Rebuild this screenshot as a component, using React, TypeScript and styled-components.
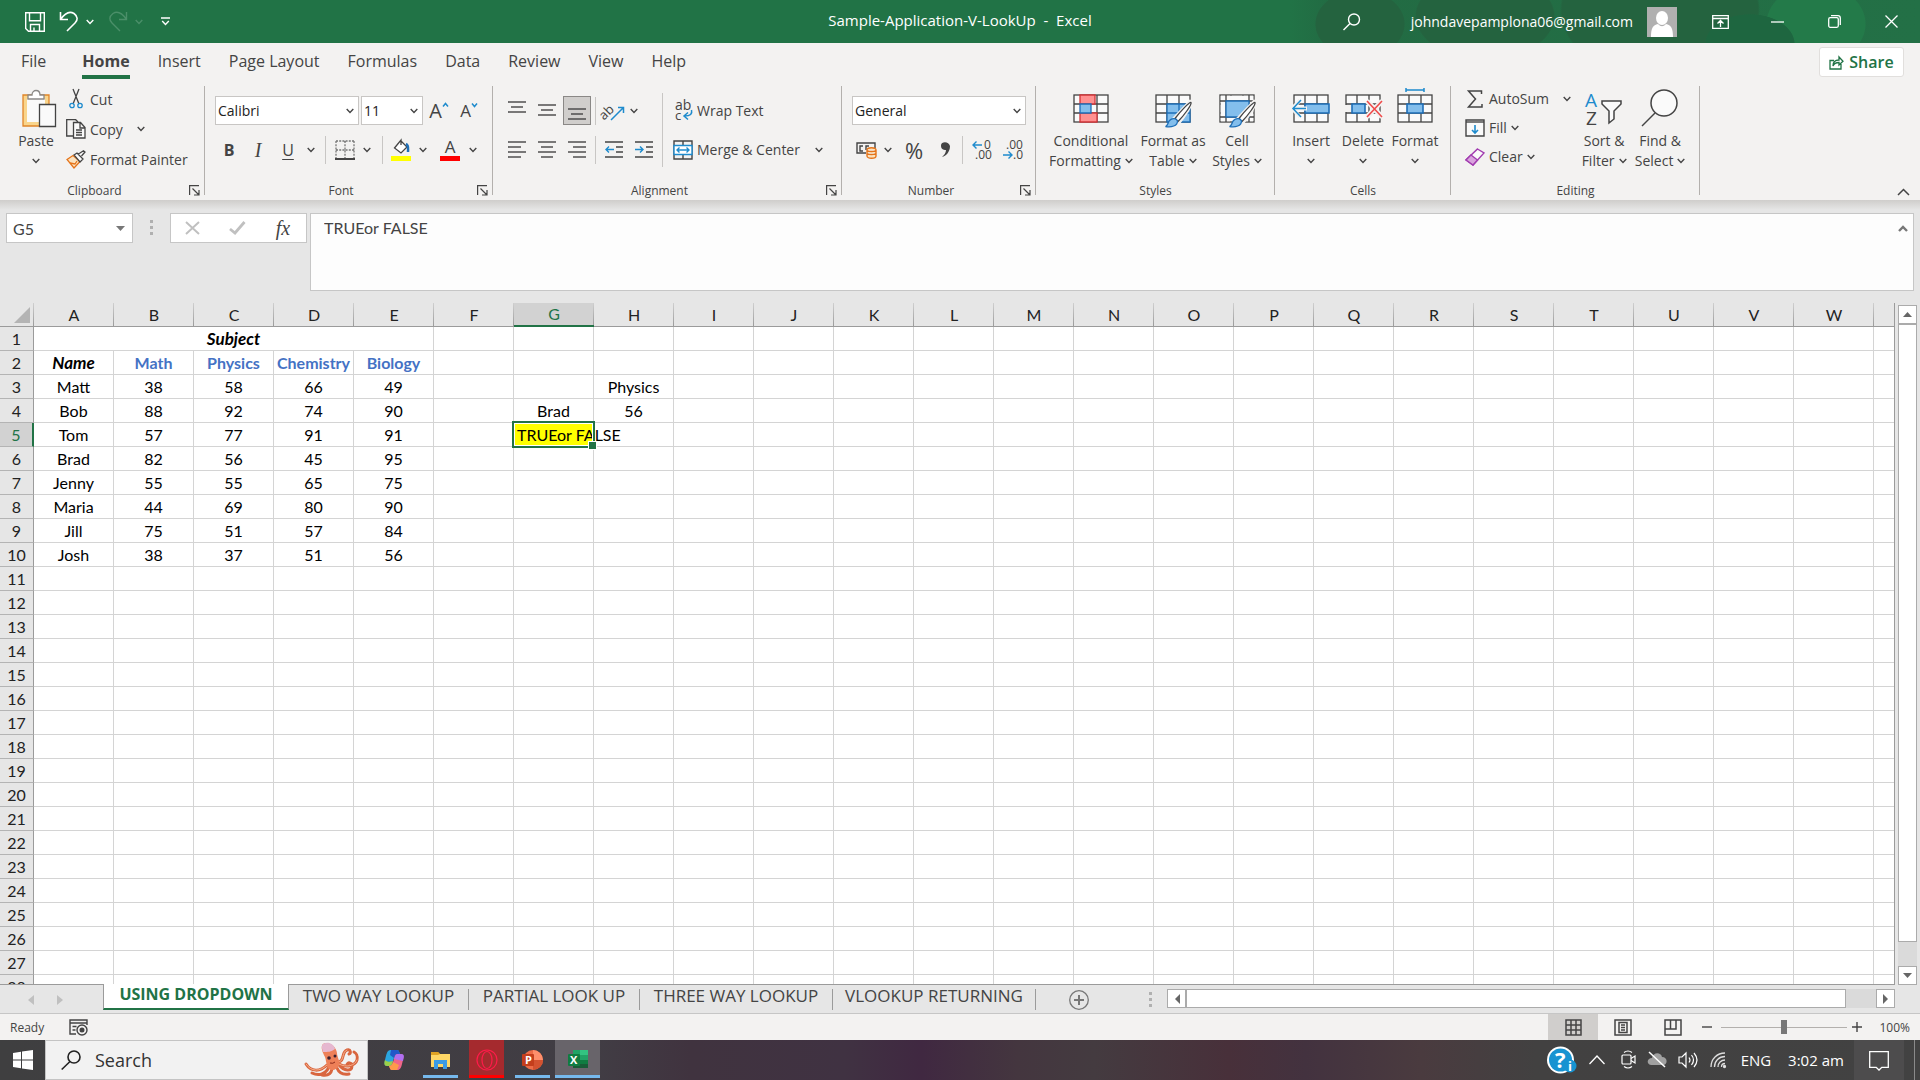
import React from 'react';
import styled, { createGlobalStyle, css } from 'styled-components';

const ui = '"Open Sans", "Noto Sans", sans-serif';
const cellFont = 'Lato, "Open Sans", sans-serif';
const green = '#217346';
const ink = '#444444';
const blue = '#1e8bcd';

const Global = createGlobalStyle`
  * { box-sizing: border-box; }
  body { margin: 0; font-family: ${ui}; font-size: 14px; color: ${ink}; background: #e6e6e6; }
  button, input, select, textarea { font: inherit; color: inherit; margin: 0; }
  button { border: 0; padding: 0; background: none; }
  svg { display: block; flex: none; overflow: visible; }
`;

const App = styled.div`
  height: 100vh;
  display: flex;
  flex-direction: column;
  overflow: hidden;
  white-space: nowrap;
`;

const Button = styled.button<{ $w?: number; $on?: boolean }>`
  display: flex;
  align-items: center;
  justify-content: center;
  flex: none;
  height: 29px;
  width: ${(p) => (p.$w ? `${p.$w}px` : 'auto')};
  ${(p) => p.$on && css`background: #d0cecc; border: 1px solid #8a8886;`}
`;

/* ---------- title bar ---------- */
const TitleBar = styled.header`
  height: 43px;
  flex: none;
  display: grid;
  grid-template-columns: 1fr auto 1fr;
  color: #fff;
  background:
    radial-gradient(ellipse 45px 30px at 1750px 44px, #1e6640 98%, transparent),
    radial-gradient(ellipse 50px 40px at 1816px 24px, #237a49 98%, transparent),
    radial-gradient(ellipse 100px 70px at 1660px 10px, #24633f 98%, transparent),
    radial-gradient(ellipse 70px 44px at 1485px 16px, #24633f 98%, transparent),
    radial-gradient(ellipse 45px 34px at 1360px 24px, #24633f 98%, transparent),
    linear-gradient(90deg, ${green} 1290px, #226b43 1330px, #237046 100%);
`;
const QuickAccess = styled.div`
  display: flex;
  align-items: center;
  gap: 14px;
  padding-left: 25px;
`;
const QuickPair = styled.div`
  display: flex;
  gap: 7px;
`;
const DocTitle = styled.h1`
  margin: 0;
  font-size: 15px;
  font-weight: 400;
  line-height: 40px;
  white-space: pre;
`;
const Account = styled.div`
  display: flex;
  align-items: center;
  justify-content: flex-end;
  padding-right: 10px;
`;
const Email = styled.button`
  display: flex;
  align-items: center;
  gap: 14px;
  margin: 0 5px 0 50px;
`;

/* ---------- tabs ---------- */
const TabRow = styled.nav`
  height: 37px;
  flex: none;
  display: flex;
  align-items: stretch;
  gap: 28px;
  padding: 0 16px 0 21px;
  background: #f3f2f1;
  font-size: 16px;
`;
const Tab = styled.button<{ $active?: boolean }>`
  line-height: 27px;
  padding-top: 5px;
  border-bottom: 4px solid transparent;
  margin-bottom: 1px;
  ${(p) => p.$active && css`font-weight: 700; border-color: ${green}; margin-left: 8px;`}
`;
const Share = styled.button`
  display: flex;
  align-items: center;
  justify-content: center;
  gap: 5px;
  width: 85px;
  height: 30px;
  margin: 4px 0 0 auto;
  border: 1px solid #e1dfdd;
  border-radius: 3px;
  background: #fff;
  color: ${green};
  font-weight: 600;
`;

/* ---------- ribbon ---------- */
const Ribbon = styled.div`
  height: 120px;
  flex: none;
  display: flex;
  background: #f3f2f1;
`;
const GroupBox = styled.section<{ $w: number }>`
  width: ${(p) => p.$w}px;
  flex: none;
  display: flex;
  flex-direction: column;
  padding-top: 4px;
  background: linear-gradient(#b3b0ad, #b3b0ad) right 6px / 1px 109px no-repeat;
`;
const GroupBody = styled.div<{ $pad: number; $gap?: number }>`
  height: 96px;
  display: flex;
  align-items: flex-start;
  padding-left: ${(p) => p.$pad}px;
  gap: ${(p) => p.$gap || 0}px;
`;
const GroupFoot = styled.div<{ $launch?: boolean }>`
  height: 20px;
  display: grid;
  grid-template-columns: ${(p) => (p.$launch ? '1fr 16px' : '1fr')};
  align-items: center;
  text-align: center;
  font-size: 12px;
`;
const Stack = styled.div<{ $compact?: boolean }>`
  display: flex;
  flex-direction: column;
  ${(p) => !p.$compact && css`padding-top: 12px; gap: 10px;`}
`;
const Row = styled.div<{ $gap?: number }>`
  display: flex;
  align-items: center;
  gap: ${(p) => p.$gap || 0}px;
`;
const Sep = styled.span<{ $m: number }>`
  width: 1px;
  height: 28px;
  margin: 0 ${(p) => p.$m}px;
  background: #c8c6c4;
`;
const TallSep = styled(Sep)`
  height: 74px;
  margin-top: 9px;
`;
const LineButton = styled.button<{ $h?: number }>`
  display: flex;
  align-items: center;
  gap: 4px;
  height: ${(p) => p.$h || 29}px;
`;
const Glyph = styled.span<{ $w?: number }>`
  width: ${(p) => p.$w || 20}px;
  display: flex;
  justify-content: ${(p) => (p.$w ? 'flex-end' : 'center')};
  flex: none;
`;
const BigButton = styled.button<{ $w: number }>`
  width: ${(p) => p.$w}px;
  flex: none;
  display: flex;
  flex-direction: column;
  align-items: center;
  line-height: 20px;
  padding-top: 4px;
`;
const BigIcon = styled.span`
  height: 43px;
`;
const BigLine = styled.span`
  display: flex;
  align-items: center;
  gap: 4px;
  height: 20px;
`;
const Picker = styled.label<{ $w: number }>`
  display: flex;
  align-items: center;
  width: ${(p) => p.$w}px;
  height: 29px;
  padding-right: 4px;
  border: 1px solid #c8c6c4;
  background: #fff;
  select {
    appearance: none;
    flex: 1;
    min-width: 0;
    border: 0;
    padding: 0 2px;
    background: none;
    color: #222;
  }
`;
const Letter = styled.span<{ $size?: number; $v?: 'b' | 'i' | 'u' }>`
  font-size: ${(p) => p.$size || 16}px;
  line-height: 20px;
  ${(p) => p.$v === 'b' && css`font-weight: 700;`}
  ${(p) => p.$v === 'i' && css`font-family: "Liberation Serif", serif; font-style: italic; font-size: 20px;`}
  ${(p) => p.$v === 'u' && css`text-decoration: underline; text-underline-offset: 3px;`}
`;
const Swatch = styled.span<{ $c: string }>`
  display: flex;
  justify-content: center;
  width: 20px;
  height: 22px;
  border-bottom: 5px solid ${(p) => p.$c};
  line-height: 16px;
  font-size: 17px;
`;
const Collapse = styled.button`
  margin: auto 10px 4px auto;
`;

/* ---------- formula bar ---------- */
const FormulaBar = styled.div`
  height: 103px;
  flex: none;
  display: flex;
  align-items: flex-start;
  padding: 13px 6px 0;
  background: linear-gradient(#cfcdcb, #e6e6e6 10px);
`;
const NameBox = styled.div`
  display: flex;
  align-items: center;
  width: 127px;
  height: 30px;
  padding: 0 7px 0 6px;
  border: 1px solid #c6c6c6;
  background: #fff;
  input { flex: 1; min-width: 0; border: 0; padding: 0; background: none; font-family: ${cellFont}; font-size: 16px; }
`;
const Grip = styled.span`
  width: 3px;
  height: 15px;
  margin: 7px 17px;
  background: repeating-linear-gradient(#b0b0b0 0 3px, transparent 3px 6px);
`;
const FxBox = styled.div`
  display: flex;
  align-items: center;
  width: 137px;
  height: 30px;
  border: 1px solid #c6c6c6;
  background: #fff;
`;
const Formula = styled.div`
  flex: 1;
  display: flex;
  align-items: flex-start;
  height: 78px;
  margin-left: 3px;
  padding: 4px 4px 0 13px;
  border: 1px solid #c6c6c6;
  background: #fdfdfd;
  textarea {
    flex: 1;
    height: 66px;
    border: 0;
    padding: 0;
    resize: none;
    background: none;
    font-family: ${cellFont};
    font-size: 16px;
    line-height: 20px;
  }
`;

/* ---------- sheet ---------- */
const Sheet = styled.main`
  flex: 1;
  min-height: 0;
  display: flex;
`;
const Viewport = styled.div`
  flex: 1;
  min-width: 0;
  overflow: hidden;
  border-right: 1px solid #9b9b9b;
  border-bottom: 1px solid #9b9b9b;
  background: #fff;
`;
const Grid = styled.table`
  table-layout: fixed;
  width: 1954px;
  border-collapse: separate;
  border-spacing: 0;
  font-family: ${cellFont};
  font-size: 16px;
  line-height: 20px;
  color: #000;
`;
const ColHead = styled.th<{ $on?: boolean }>`
  height: 24px;
  padding: 0;
  font-weight: 400;
  color: ${(p) => (p.$on ? green : '#222')};
  border-bottom: ${(p) => (p.$on ? `2px solid ${green}` : '1px solid #9b9b9b')};
  background: linear-gradient(#cfcfcf, #9b9b9b) right / 1px 100% no-repeat, ${(p) => (p.$on ? '#d2d2d2' : '#e6e6e6')};
  svg { margin-left: 14px; }
`;
const RowHead = styled.th<{ $on?: boolean }>`
  height: 24px;
  padding: 0;
  font-weight: 400;
  color: ${(p) => (p.$on ? green : '#222')};
  border-right: ${(p) => (p.$on ? `2px solid ${green}` : '1px solid #9b9b9b')};
  border-bottom: 1px solid #b4b4b4;
  background: ${(p) => (p.$on ? '#d2d2d2' : '#e6e6e6')};
`;
type Kind = 'name' | 'head' | 'subject' | 'selected' | undefined;
const Cell = styled.td<{ $kind?: Kind }>`
  padding: 0;
  text-align: center;
  border-right: 1px solid #d4d4d4;
  border-bottom: 1px solid #d4d4d4;
  ${(p) => (p.$kind === 'name' || p.$kind === 'subject') && css`font-size: 17px; font-weight: 700; font-style: italic;`}
  ${(p) => p.$kind === 'head' && css`font-weight: 700; color: #4472c4;`}
  ${(p) => p.$kind === 'selected' && css`
    position: relative;
    padding-left: 3px;
    text-align: left;
    background: #ffff00;
    &::before {
      content: '';
      position: absolute;
      inset: -2px;
      border: 2px solid ${green};
      box-shadow: inset 0 0 0 1px #fff;
    }
    &::after {
      content: '';
      position: absolute;
      right: -4px;
      bottom: -4px;
      width: 7px;
      height: 7px;
      border: 1px solid #fff;
      background: ${green};
    }
  `}
`;
const VScroll = styled.div`
  width: 25px;
  display: flex;
  flex-direction: column;
  padding: 2px 3px 0;
`;
const ScrollButton = styled.button`
  display: flex;
  align-items: center;
  justify-content: center;
  width: 19px;
  height: 19px;
  flex: none;
  border: 1px solid #ababab;
  background: #fff;
`;
const Thumb = styled.div<{ $grow: number }>`
  flex: ${(p) => p.$grow};
  border: 1px solid #ababab;
  background: #fff;
`;
const Track = styled.div<{ $grow: number }>`
  flex: ${(p) => p.$grow};
  background: #dadada;
`;

/* ---------- sheet tabs ---------- */
const TabStrip = styled.div`
  height: 29px;
  flex: none;
  display: flex;
  align-items: flex-start;
  padding-right: 25px;
  border-bottom: 1px solid #c6c6c6;
  background: #e6e6e6;
  font-size: 17px;
`;
const Arrows = styled.div`
  display: flex;
  align-items: center;
  gap: 23px;
  width: 103px;
  height: 29px;
  padding-left: 28px;
`;
const SheetTab = styled.button<{ $w: number; $active?: boolean }>`
  width: ${(p) => p.$w}px;
  height: 21px;
  margin-top: 4px;
  padding-bottom: 8px;
  line-height: 13px;
  border-right: 1px solid #9b9b9b;
  ${(p) => p.$active && css`
    height: 26px;
    margin-top: -1px;
    padding-bottom: 3px;
    background: #fff;
    color: ${green};
    font-size: 16px;
    font-weight: 700;
    border-left: 1px solid #9b9b9b;
    border-bottom: 2px solid ${green};
  `}
`;
const HScroll = styled.div`
  flex: 1;
  display: flex;
  height: 19px;
  margin: 4px 0 0;
`;
const TabGrip = styled(Grip)`
  height: 15px;
  margin: 7px 15px 0 27px;
`;

/* ---------- status bar ---------- */
const StatusBar = styled.footer`
  height: 26px;
  flex: none;
  display: flex;
  align-items: center;
  padding: 0 10px;
  background: #f3f2f1;
  font-size: 12px;
`;
const Macro = styled.button`
  margin: 0 auto 0 25px;
`;
const ViewButton = styled.button<{ $on?: boolean }>`
  display: flex;
  align-items: center;
  justify-content: center;
  width: 50px;
  height: 26px;
  background: ${(p) => (p.$on ? '#d0cecc' : 'none')};
`;
const Zoom = styled.input`
  appearance: none;
  width: 126px;
  height: 15px;
  margin: 0 5px;
  background: linear-gradient(#b3b0ad, #b3b0ad) center / 100% 1px no-repeat;
  &::-webkit-slider-thumb {
    appearance: none;
    width: 6px;
    height: 14px;
    background: #777;
  }
`;
const Percent = styled.span`
  width: 48px;
  text-align: right;
`;

/* ---------- taskbar ---------- */
const Taskbar = styled.div`
  height: 40px;
  flex: none;
  display: flex;
  color: #fff;
  background: linear-gradient(90deg, #3f3f40 0, #413d44 31%, #40333f 36%, #403242 44%, #402841 48%, #44363f 53%, #443b40 57%, #48303a 64%, #43323f 68%, #4a3b3f 74%, #424141 80%, #424242 100%);
`;
const Task = styled.button<{ $w: number; $bg?: string; $bar?: string }>`
  width: ${(p) => p.$w}px;
  display: flex;
  align-items: center;
  justify-content: center;
  flex: none;
  padding-top: 4px;
  background: ${(p) => p.$bg || 'none'};
  border-bottom: 3px solid ${(p) => p.$bar || 'transparent'};
  margin-bottom: 2px;
`;
const SearchBox = styled.label`
  display: flex;
  align-items: center;
  gap: 14px;
  width: 323px;
  padding: 0 8px 0 15px;
  border: 1px solid #c4c4c4;
  background: #f2f2f2;
  color: #222;
  input { flex: 1; min-width: 0; border: 0; padding: 0; background: none; font-size: 18px; &::placeholder { color: #333; opacity: 1; } }
`;
const Apps = styled.div`
  display: flex;
  gap: 11px;
  padding-left: 8px;
  margin-right: 5px;
`;
const Tray = styled.div`
  display: flex;
  margin-left: auto;
  font-size: 15px;
`;
const Notify = styled(Task)`
  background: #4d4c4d;
  margin: 0 10px 0 2px;
`;
const Edge = styled.span`
  width: 6px;
  border-left: 1px solid #8a8a8a;
`;

/* ---------- icons ---------- */
type IconProps = { w: number; h: number; children: React.ReactNode; c?: string; sw?: number };
const Icon = ({ w, h, children, c = '#444', sw = 1 }: IconProps) => (
  <svg width={w} height={h} viewBox={`0 0 ${w} ${h}`} fill="none" stroke={c} strokeWidth={sw} aria-hidden="true">
    {children}
  </svg>
);
const Down = ({ c = '#444' }: { c?: string }) => <Icon w={8} h={6} c={c} sw={1.4}><path d="M.7 1 4 4.4 7.3 1" /></Icon>;
const Tri = ({ d, c = '#666', w = 9, h = 9 }: { d: string; c?: string; w?: number; h?: number }) => (
  <svg width={w} height={h} viewBox={`0 0 ${w} ${h}`} fill={c} aria-hidden="true"><path d={d} /></svg>
);
const Launcher = () => <Icon w={11} h={11} sw={1.2}><path d="M.6 10V.6H10M3.5 3.5l6 6M10 5v5H5" /></Icon>;
const Lines = ({ rows, c = '#444' }: { rows: [number, number, number][]; c?: string }) => (
  <Icon w={18} h={18} c={c} sw={1.4}>{rows.map(([x1, x2, y]) => <path key={y} d={`M${x1} ${y}H${x2}`} />)}</Icon>
);
const TableArt = ({ children }: { children?: React.ReactNode }) => (
  <Icon w={40} h={40} sw={1.3}>
    <rect x="3" y="7" width="34" height="27" fill="#fafafa" />
    <path d="M3 16h34M3 25h34M14 7v27M26 7v27" />
    {children}
  </Icon>
);
const Brush = () => (
  <>
    <path d="M37 14 22 30l4 4c5-6 9-12 12-19z" fill="#fff" stroke="#f3f2f1" strokeWidth="4" />
    <path d="M38 14.5c-1-1-10 8-16 16l3 3c6-6 14-17 13-19z" fill="#fff" />
    <path d="M24.5 33c0 5-6 6.500-12 5.500 3-1 2-4 4-6 3-3 7-2 8 .5z" fill="#83beec" stroke="#1e6fb8" />
  </>
);
const Octopus = () => (
  <Icon w={54} h={36} c="#d9663f" sw={3}>
    <path d="M22 23C15 30 6 30 1 22M24 25c-4 8-11 9-17 6M27 27c-1 5-4 7-10 6M32 26c2 5 6 7 12 6M34 23c5 6 13 7 13 1 0-4-5-4-5-1M33 20c7 0 3-10 9-12 4-1 4 3 2 4M34 22c7 4 16 2 18-4 1-4-1-7-3-8" strokeLinecap="round" />
    <path d="M22 23C15 30 6 30 1 22M33 20c7 0 3-10 9-12M34 22c7 4 16 2 18-4" strokeLinecap="round" stroke="#f7b08c" strokeWidth="1" />
    <path d="M18 2C23-1 31 4 32 11c0 4 3 7 2 12-2 6-10 7-12 1-1-4-1-6-2-9-2-4-5-10-2-13z" fill="#ee8058" stroke="none" />
    <path d="M18 2C23-1 29 2 30 7c-4 3-7 3-12 3-1-3-2-6 0-8z" fill="#e6b8d0" stroke="none" />
    <circle cx="24" cy="16" r="1.800" fill="#3a2030" stroke="none" /><circle cx="30" cy="14" r="1.500" fill="#3a2030" stroke="none" />
    <path d="M25 21q3 1 5-1" stroke="#8d2c1c" strokeWidth="1" />
  </Icon>
);
const Person = () => (
  <svg width="30" height="30" viewBox="0 0 30 30" fill="#fff" aria-hidden="true">
    <path fill="#b0b0b0" d="M0 0h30v30H0z" />
    <ellipse cx="15" cy="11" rx="6" ry="7" /><path d="M4 30c0-9 2-12 7-13 3 3 5 3 8 0 5 1 7 4 7 13z" />
  </svg>
);

/* ---------- data ---------- */
const columns = 'ABCDEFGHIJKLMNOPQRSTUVWX'.split('');
const rows: (string | undefined)[][] = [
  ['Subject'],
  ['Name', 'Math', 'Physics', 'Chemistry', 'Biology'],
  ['Matt', '38', '58', '66', '49', , , 'Physics'],
  ['Bob', '88', '92', '74', '90', , 'Brad', '56'],
  ['Tom', '57', '77', '91', '91', , 'TRUEor FALSE'],
  ['Brad', '82', '56', '45', '95'],
  ['Jenny', '55', '55', '65', '75'],
  ['Maria', '44', '69', '80', '90'],
  ['Jill', '75', '51', '57', '84'],
  ['Josh', '38', '37', '51', '56'],
];
const kindOf = (r: number, c: number): Kind => {
  if (r === 0 && c === 0) return 'subject';
  if (r === 1 && c === 0) return 'name';
  if (r === 1 && c < 5) return 'head';
  if (r === 4 && c === 6) return 'selected';
  return undefined;
};
const tabs = ['File', 'Home', 'Insert', 'Page Layout', 'Formulas', 'Data', 'Review', 'View', 'Help'];
const sheets: [string, number][] = [['USING DROPDOWN', 186], ['TWO WAY LOOKUP', 180], ['PARTIAL LOOK UP', 171], ['THREE WAY LOOKUP', 193], ['VLOOKUP RETURNING', 203]];

const Group = ({ title, w, pad, gap, launch, children }: { title: string; w: number; pad: number; gap?: number; launch?: boolean; children: React.ReactNode }) => (
  <GroupBox $w={w} aria-label={title}>
    <GroupBody $pad={pad} $gap={gap}>{children}</GroupBody>
    <GroupFoot $launch={launch}><span>{title}</span>{launch && <button aria-label={`${title} settings`}><Launcher /></button>}</GroupFoot>
  </GroupBox>
);
const Big = ({ w, icon, a, b }: { w: number; icon: React.ReactNode; a: string; b?: string }) => (
  <BigButton $w={w}><BigIcon>{icon}</BigIcon><BigLine>{a}</BigLine><BigLine>{b}<Down /></BigLine></BigButton>
);
const Drop = ({ w, label, c }: { w: number; label: string; c?: string }) => <Button $w={w} aria-label={label}><Down c={c} /></Button>;

export default function Workbook() {
  return (
    <App>
      <Global />
      <TitleBar>
        <QuickAccess>
          <Button $w={20} aria-label="Save"><Icon w={20} h={20} c="#fff" sw={1.4}><path d="M.7.7h18.600v18.600H3.500L.7 16.500zM4.500.7v8h11v-8M5.500 19v-6.500h9V19M9 19v-3.500" /></Icon></Button>
          <QuickPair>
            <Button $w={20} aria-label="Undo"><Icon w={20} h={21} c="#fff" sw={1.6}><path d="M1.500 1v7.500H9M1.500 8.500C6 2 11 0 15 2.500c4 3 4 6.500 1 9.500L8 20" /></Icon></Button>
            <Drop w={8} label="Undo history" c="#fff" />
          </QuickPair>
          <QuickPair>
            <Button $w={20} aria-label="Redo"><Icon w={20} h={21} c="#4b8f69" sw={1.4}><path d="M18.500 1v7.500H11M18.500 8.500C14 2 9 0 5 2.500c-4 3-4 6.500-1 9.500l8 8" /></Icon></Button>
            <Drop w={8} label="Redo history" c="#4b8f69" />
          </QuickPair>
          <Button $w={17} aria-label="Customize quick access"><Icon w={9} h={9} c="#fff" sw={1.4}><path d="M0 1h9M1.200 4 4.500 7.400 7.800 4" /></Icon></Button>
        </QuickAccess>
        <DocTitle>{'Sample-Application-V-LookUp  -  Excel'}</DocTitle>
        <Account>
          <Button aria-label="Search"><Icon w={18} h={18} c="#fff" sw={1.4}><circle cx="11" cy="6.500" r="5.500" /><path d="M7 10.500.5 17" /></Icon></Button>
          <Email>johndavepamplona06@gmail.com<Person /></Email>
          <Button $w={76} aria-label="Ribbon options"><Icon w={17} h={14} c="#fff" sw={1.3}><path d="M.7.7h15.600v12.600H.7zM.7 3.500h15.600M8.500 12V6M5.500 8.500l3-3 3 3" /></Icon></Button>
          <Button $w={38} aria-label="Minimize"><Icon w={13} h={12} c="#fff" sw={1.3}><path d="M0 6h13" /></Icon></Button>
          <Button $w={76} aria-label="Restore"><Icon w={13} h={13} c="#fff" sw={1.3}><rect x=".7" y="2.700" width="9.600" height="9.600" rx="1.500" /><path d="M3 .7h7q2.300 0 2.300 2.300v7" /></Icon></Button>
          <Button $w={38} aria-label="Close"><Icon w={13} h={13} c="#fff" sw={1.3}><path d="m.5.5 12 12M12.500.5l-12 12" /></Icon></Button>
        </Account>
      </TitleBar>

      <TabRow>
        {tabs.map((t) => <Tab key={t} $active={t === 'Home'}>{t}</Tab>)}
        <Share><Icon w={15} h={15} c={green} sw={1.3}><path d="M5 5.500H1v8.500h11V9M4 11c0-4 2-6 6-6V2l4 4.300L10 10V7.500C7 7.500 5 8.500 4 11z" /></Icon>Share</Share>
      </TabRow>

      <Ribbon>
        <Group title="Clipboard" w={205} pad={9} gap={3} launch>
          <Big w={54} a="Paste" icon={
            <Icon w={36} h={42} sw={1.3}>
              <path d="M5 7h26v31H5z" fill="#f9d58c" stroke="#e08528" /><path d="M9 11h18v23H9z" fill="#fafafa" stroke="none" />
              <path d="M10 11V7h4c0-6 8-6 8 0h4v4z" fill="#fff" stroke="#8a8886" />
              <path d="M21.500 16.500h16v22h-16z" fill="#fafafa" />
            </Icon>} />
          <Stack $compact>
            <LineButton $h={30}><Glyph><Icon w={14} h={20} sw={1.3}><path d="M4 0l6 15M10 0 4 15" /><circle cx="3" cy="16.500" r="2.200" stroke={blue} /><circle cx="11" cy="16.500" r="2.200" stroke={blue} /></Icon></Glyph>Cut</LineButton>
            <Row>
              <LineButton $h={30}><Glyph><Icon w={20} h={20} sw={1.3}><path d="M7 17H.7V.7h9L12 3" /><path d="M7.500 3.500h7l4.500 5V19H7.500zM14 3.500V9h5M10 11h6M10 13.500h6M10 16h6" fill="#fafafa" /></Icon></Glyph>Copy</LineButton>
              <Drop w={36} label="Copy options" />
            </Row>
            <LineButton $h={30}><Glyph><Icon w={20} h={19} sw={1.3}><path d="M1 9.500 7 5.500l7 6-6 6.500z" fill="#fbe3c0" stroke="#e5741a" /><path d="M4 13l5 1 2-3" stroke="#e5741a" /><path d="m8 5 3-2 6 6-3 3zM12 4l2-1L17.500.7 19 2l-3.500 4" fill="#fafafa" /></Icon></Glyph>Format Painter</LineButton>
          </Stack>
        </Group>

        <Group title="Font" w={288} pad={10} launch>
          <Stack>
            <Row $gap={2}>
              <Picker $w={144}><select aria-label="Font"><option>Calibri</option></select><Down /></Picker>
              <Picker $w={62}><select aria-label="Font size"><option>11</option></select><Down /></Picker>
              <Row>
                <Button $w={28} aria-label="Grow font"><Letter $size={20}>A</Letter><Icon w={7} h={17} c={blue} sw={1.5}><path d="m1 4.500 2.500-3 2.500 3" /></Icon></Button>
                <Button $w={32} aria-label="Shrink font"><Letter $size={17}>A</Letter><Icon w={7} h={17} c={blue} sw={1.5}><path d="m1 1.500 2.500 3 2.500-3" /></Icon></Button>
              </Row>
            </Row>
            <Row>
              <Button $w={28}><Letter $v="b">B</Letter></Button>
              <Button $w={30}><Letter $v="i">I</Letter></Button>
              <Button $w={30}><Letter $v="u">U</Letter></Button>
              <Drop w={16} label="Underline options" />
              <Sep $m={6} />
              <Button $w={26} aria-label="Borders"><Icon w={20} h={20} sw={1.3}><path d="M1 1h18M1 10h18M1 1v17M10 1v17M19 1v17" strokeDasharray="2 1.200" stroke="#777" /><path d="M0 19h20" strokeWidth="2" /></Icon></Button>
              <Drop w={18} label="Border options" />
              <Sep $m={6} />
              <Button $w={24} aria-label="Fill color"><Swatch $c="#ffff00"><Icon w={18} h={16} sw={1.3}><path d="M9 2 15 8l-6 6-6.500-5L9 1v5" fill="#fff" /><path d="M14 5c3 1 2 5 2 8" stroke="#1e6fb8" strokeWidth="2.500" /></Icon></Swatch></Button>
              <Drop w={20} label="Fill color options" />
              <Button $w={34} aria-label="Font color"><Swatch $c="#ff0000">A</Swatch></Button>
              <Drop w={12} label="Font color options" />
            </Row>
          </Stack>
        </Group>

        <Group title="Alignment" w={349} pad={10} launch>
          <Stack>
            <Row>
              <Button $w={28} aria-label="Top align"><Lines rows={[[0, 18, 0], [3, 15, 5], [0, 18, 10]]} /></Button>
              <Button $w={32} aria-label="Middle align"><Lines rows={[[0, 18, 3], [3, 15, 8], [0, 18, 13]]} /></Button>
              <Button $w={28} $on aria-label="Bottom align"><Lines rows={[[0, 18, 7], [3, 15, 12], [0, 18, 17]]} /></Button>
              <Sep $m={4} />
              <Button $w={28} aria-label="Orientation"><Icon w={22} h={20}><text x="-3" y="14" fontSize="13" transform="rotate(-45 6 12)" fill="#444" stroke="none">ab</text><path d="M8 19 20 7M15 6.500h5.500V12" stroke={blue} strokeWidth="1.500" /></Icon></Button>
              <Drop w={12} label="Orientation options" />
            </Row>
            <Row>
              <Button $w={28} aria-label="Align left"><Lines rows={[[0, 18, 1], [0, 13, 6], [0, 18, 11], [0, 13, 16]]} /></Button>
              <Button $w={32} aria-label="Center"><Lines rows={[[0, 18, 1], [3, 15, 6], [0, 18, 11], [3, 15, 16]]} /></Button>
              <Button $w={28} aria-label="Align right"><Lines rows={[[0, 18, 1], [5, 18, 6], [0, 18, 11], [5, 18, 16]]} /></Button>
              <Sep $m={4} />
              <Button $w={28} aria-label="Decrease indent"><Icon w={18} h={18} sw={1.4}><path d="M0 1h18M11 6h7M11 11h7M0 16h18" /><path d="M9 8.500H1M4 5.500l-3 3 3 3" stroke={blue} /></Icon></Button>
              <Button $w={32} aria-label="Increase indent"><Icon w={18} h={18} sw={1.4}><path d="M0 1h18M11 6h7M11 11h7M0 16h18" /><path d="M0 8.500h8M5 5.500l3 3-3 3" stroke={blue} /></Icon></Button>
            </Row>
          </Stack>
          <TallSep $m={2} />
          <Stack>
            <Row><LineButton><Glyph $w={28}><Icon w={18} h={22}><text x="0" y="10" fontSize="14" fill="#444" stroke="none">ab</text><text x="0" y="20" fontSize="13" fill="#444" stroke="none">c</text><path d="M16.500 10c1 4-1 6-7 6M13 12.500 9 16l4 3.500" stroke={blue} strokeWidth="1.500" /></Icon></Glyph>Wrap Text</LineButton></Row>
            <Row>
              <LineButton><Glyph $w={28}><Icon w={20} h={20} sw={1.4}><path d="M1 1h18v18H1zM10 1v4M10 15v4" /><path d="M1 5.500h18v9H1z" stroke={blue} fill="#fff" /><path d="M4 10h12M6.500 7.500 4 10l2.500 2.500M13.500 7.500 16 10l-2.500 2.500" stroke={blue} /></Icon></Glyph>Merge &amp; Center</LineButton>
              <Drop w={38} label="Merge options" />
            </Row>
          </Stack>
        </Group>

        <Group title="Number" w={194} pad={10} launch>
          <Stack>
            <Picker $w={174}><select aria-label="Number format"><option>General</option></select><Down /></Picker>
            <Row>
              <Button $w={28} aria-label="Currency"><Icon w={21} h={18} sw={1.4}><path d="M10 12H1V2h18v5M7 5H4v5h3M10 9V5h3" /><path d="M11 9c0-3 9-3 9 0v6c0 3-9 3-9 0zM11 9c0 2 9 2 9 0M11 12c0 2 9 2 9 0" stroke="#e5741a" fill="#fbe3c0" /></Icon></Button>
              <Drop w={16} label="Currency options" />
              <Button $w={36} aria-label="Percent"><Letter $size={22}>%</Letter></Button>
              <Button $w={26} aria-label="Comma"><svg width="11" height="17" viewBox="0 0 11 17" fill="#444"><path d="M1 4.500C1 0 9 0 10 5c0 6-4 10-8 11 2-2 4-4 4-7-3 0-5-1-5-4.500z" /></svg></Button>
              <Sep $m={4} />
              <Button $w={30} aria-label="Increase decimal"><Icon w={20} h={20}><text x="12" y="9" fontSize="12" fill="#444" stroke="none">0</text><text x="3" y="19" fontSize="12" fill="#444" stroke="none">.00</text><path d="M10 5H1M4.500 1.500 1 5l3.500 3.500" stroke={blue} strokeWidth="1.400" /></Icon></Button>
              <Button $w={32} aria-label="Decrease decimal"><Icon w={20} h={20}><text x="3" y="9" fontSize="12" fill="#444" stroke="none">.00</text><text x="10" y="19" fontSize="12" fill="#444" stroke="none">.0</text><path d="M0 15h9M5.500 11.500 9 15l-3.500 3.500" stroke={blue} strokeWidth="1.400" /></Icon></Button>
            </Row>
          </Stack>
        </Group>

        <Group title="Styles" w={239} pad={10}>
          <Big w={90} a="Conditional" b="Formatting" icon={
            <TableArt><path d="M9 7h15v9H9zM9 25h17v9H9z" fill="#ff9090" stroke="#d13438" /><path d="M9 16h11v9H9z" fill="#83beec" stroke="#1e6fb8" /></TableArt>} />
          <Big w={74} a="Format as" b="Table" icon={<TableArt><path d="M14 16h23v18H14z" fill="#83beec" stroke="#1e6fb8" /><path d="M14 25h23M26 16v18" stroke="#1e6fb8" /><Brush /></TableArt>} />
          <Big w={54} a="Cell" b="Styles" icon={<TableArt><path d="M3.700 7.700h32.600v25.600H3.700z" fill="#fafafa" stroke="none" /><path d="M3 13h34M9 7v27M32 7v27M3 29h34" /><path d="M9 13h23v16H9z" fill="#83beec" stroke="#1e6fb8" /><Brush /></TableArt>} />
        </Group>

        <Group title="Cells" w={176} pad={10}>
          <Big w={52} a="Insert" icon={<TableArt><path d="M14 16h24v9H14z" fill="#83beec" stroke="#1e6fb8" strokeWidth="1.600" /><path d="M9 12 1.500 20.500 9 29M2 20.500h14" stroke="#f3f2f1" strokeWidth="4" /><path d="M10 12 2 20.500l8 8.500M2 20.500h13" stroke={blue} strokeWidth="1.500" /></TableArt>} />
          <Big w={52} a="Delete" icon={<TableArt><path d="M2 17h6v7H2z" fill="#f3f2f1" stroke="none" /><path d="M9 16h13v9H9z" fill="#83beec" stroke="#1e6fb8" strokeWidth="1.600" /><path d="m24 13 15 16M39 13 24 29" stroke="#f3f2f1" strokeWidth="5" /><path d="m24 13 15 16M39 13 24 29" stroke="#f04a4a" strokeWidth="1.600" /></TableArt>} />
          <Big w={52} a="Format" icon={<TableArt><path d="M12 16h16v9H12z" fill="#83beec" stroke="#1e6fb8" strokeWidth="1.600" /><path d="M11 2h18M11 0v4M29 0v4" stroke={blue} strokeWidth="1.500" /></TableArt>} />
        </Group>

        <Group title="Editing" w={249} pad={14}>
          <Stack $compact>
            <Row $gap={8}>
              <LineButton><Glyph><Icon w={16} h={18} sw={1.5}><path d="M14.500 4V1H1.500l7 8-7 8h13.500v-3" /></Icon></Glyph>AutoSum</LineButton>
              <Drop w={19} label="AutoSum options" />
            </Row>
            <LineButton><Glyph><Icon w={20} h={18} sw={1.4}><path d="M1 1h18v16H1z" fill="#fafafa" /><path d="M1 3h18" /><path d="M10 6v8M7 11l3 3 3-3" stroke={blue} strokeWidth="1.600" /></Icon></Glyph>Fill<Down /></LineButton>
            <LineButton><Glyph><Icon w={20} h={18} c="#a23cb0" sw={1.4}><path d="M12.500 1 19 5 8 17l-7-5z" fill="#fafafa" /><path d="m6 7 6.500 5L8 17l-7-5z" fill="#d9a3de" /></Icon></Glyph>Clear<Down /></LineButton>
          </Stack>
          <Row>
            <Big w={56} a="Sort &" b="Filter" icon={<Icon w={38} h={40} sw={1.5}><text x="0" y="19" fontSize="19" fill={blue} stroke="none">A</text><text x="1" y="37" fontSize="19" fill="#444" stroke="none">Z</text><path d="M17 13h19v3l-7 7v8l-5 4V23l-7-7z" fill="#fafafa" /></Icon>} />
            <Big w={56} a="Find &" b="Select" icon={<Icon w={38} h={40} sw={1.5}><circle cx="23" cy="15" r="13" fill="#fafafa" /><path d="M14 25 1 38" /></Icon>} />
          </Row>
        </Group>
        <Collapse aria-label="Collapse ribbon"><Icon w={13} h={8} sw={1.5}><path d="m1 7 5.500-5.500L12 7" /></Icon></Collapse>
      </Ribbon>

      <FormulaBar>
        <NameBox><input aria-label="Name box" defaultValue="G5" /><Tri d="M0 2h9L4.500 7z" c="#777" /></NameBox>
        <Grip />
        <FxBox>
          <Button $w={42} aria-label="Cancel"><Icon w={15} h={14} c="#c0c0c0" sw={2}><path d="m1 1 13 12M14 1 1 13" /></Icon></Button>
          <Button $w={48} aria-label="Enter"><Icon w={17} h={14} c="#c0c0c0" sw={2.8}><path d="m1 8 5 4L15.500 1" /></Icon></Button>
          <Button $w={44} aria-label="Insert function"><Letter $v="i">fx</Letter></Button>
        </FxBox>
        <Formula><textarea aria-label="Formula" defaultValue="TRUEor FALSE" /><Button aria-label="Collapse formula bar" $w={12}><Icon w={10} h={16} c="#777" sw={2.4}><path d="m1 6 4-4 4 4" /></Icon></Button></Formula>
      </FormulaBar>

      <Sheet>
        <Viewport>
          <Grid>
            <colgroup><col width={34} />{columns.map((c) => <col key={c} width={80} />)}</colgroup>
            <thead>
              <tr>
                <ColHead aria-label="Select all"><Tri w={16} h={16} d="M16 0v16H0z" c="#b4b4b4" /></ColHead>
                {columns.map((c) => <ColHead key={c} $on={c === 'G'}>{c}</ColHead>)}
              </tr>
            </thead>
            <tbody>
              {Array.from({ length: 28 }, (_, r) => (
                <tr key={r}>
                  <RowHead $on={r === 4}>{r + 1}</RowHead>
                  {columns.map((c, i) => (r === 0 && i > 0 && i < 5 ? null : (
                    <Cell key={c} colSpan={r === 0 && i === 0 ? 5 : 1} $kind={kindOf(r, i)}>{rows[r]?.[i]}</Cell>
                  )))}
                </tr>
              ))}
            </tbody>
          </Grid>
        </Viewport>
        <VScroll>
          <ScrollButton aria-label="Scroll up"><Tri d="M0 7h9L4.500 2z" /></ScrollButton>
          <Thumb $grow={618} /><Track $grow={24} />
          <ScrollButton aria-label="Scroll down"><Tri d="M0 2h9L4.500 7z" /></ScrollButton>
        </VScroll>
      </Sheet>

      <TabStrip>
        <Arrows>
          <button aria-label="Previous sheet"><Tri w={6} h={10} d="M6 0v10L0 5z" c="#c0c0c0" /></button>
          <button aria-label="Next sheet"><Tri w={6} h={10} d="M0 0v10l6-5z" c="#c0c0c0" /></button>
        </Arrows>
        {sheets.map(([name, w], i) => <SheetTab key={name} $w={w} $active={i === 0}>{name}</SheetTab>)}
        <Button $w={86} aria-label="New sheet"><Icon w={20} h={20} c="#777" sw={1.3}><circle cx="10" cy="10" r="9.300" /><path d="M5 10h10M10 5v10" strokeWidth="2" /></Icon></Button>
        <TabGrip />
        <HScroll>
          <ScrollButton aria-label="Scroll left"><Tri w={6} h={10} d="M6 0v10L1 5z" /></ScrollButton>
          <Thumb $grow={660} /><Track $grow={30} />
          <ScrollButton aria-label="Scroll right"><Tri w={6} h={10} d="M0 0v10l5-5z" /></ScrollButton>
        </HScroll>
      </TabStrip>

      <StatusBar>
        <span>Ready</span>
        <Macro aria-label="Record macro"><Icon w={19} h={17} sw={1.4}><path d="M7 15H1V1h17v5M1 4h17M3.500 7.500h4M3.500 11h3" /><circle cx="13" cy="11" r="5" /><circle cx="13" cy="11" r="1.800" fill="#444" /></Icon></Macro>
        <ViewButton $on aria-label="Normal view"><Icon w={17} h={17} sw={1.5}><path d="M1 1h15v15H1zM1 6h15M1 11h15M6 1v15M11 1v15" /></Icon></ViewButton>
        <ViewButton aria-label="Page layout view"><Icon w={18} h={17} sw={1.5}><path d="M1 1h16v15H1z" /><path d="M5 3.500h8v10H5zM7 6h4M7 8.500h4M7 11h4" /></Icon></ViewButton>
        <ViewButton aria-label="Page break view"><Icon w={18} h={17} sw={1.5}><path d="M1 1h16v15H1zM1 10h11V1M6.500 1v9" /></Icon></ViewButton>
        <Button $w={18} aria-label="Zoom out"><Icon w={10} h={10} sw={1.4}><path d="M0 5h10" /></Icon></Button>
        <Zoom type="range" min={0} max={100} defaultValue={50} aria-label="Zoom" />
        <Button $w={10} aria-label="Zoom in"><Icon w={10} h={10} sw={1.4}><path d="M0 5h10M5 0v10" /></Icon></Button>
        <Percent>100%</Percent>
      </StatusBar>

      <Taskbar>
        <Task $w={45} aria-label="Start"><svg width="20" height="20" viewBox="0 0 20 20" fill="#fff"><path d="M0 3l8-1.200v7.700H0zM9 1.600 20 0v9.500H9zM0 10.500h8v7.700L0 17zM9 10.500h11V20L9 18.400z" /></svg></Task>
        <SearchBox>
          <Icon w={20} h={20} c="#222" sw={1.6}><circle cx="13" cy="7" r="6" /><path d="M9 11.500.7 19.500" /></Icon>
          <input placeholder="Search" aria-label="Search" /><Octopus />
        </SearchBox>
        <Apps>
          <Task $w={36} aria-label="Copilot">
            <svg width="20" height="20" viewBox="0 0 20 20"><path d="M2 6c1-4 2-6 5-6h6c2 0 2 2 3 4h-3c-2 0-2 1-3 4l-2 6c-1 2-2 2-4 2H3c-4 0-2-6-1-10z" fill="#2aa6e0" /><path d="M7 0h6c2 0 2 2 3 4h-3c-2 0-2 1-3 4L6 5z" fill="#2358c8" /><path d="M1 10c2 2 4 2 8 1l-1 3c-1 2-2 2-4 2H3c-3 0-3-3-2-6z" fill="#9bd04a" /><path d="M18 14c-1 4-2 6-5 6H8c-2 0-2-2-3-4 2 0 3-1 4-4l2-6c1-2 2-2 4-2h2c4 0 2 6 1 10z" fill="#f0668a" /><path d="M11 6c1-2 2-2 4-2h2c4 0 3 3 2 7-3-1-6-1-9-2z" fill="#b06ff0" /><path d="M13 20H8c-2 0-2-2-3-4 2 0 3-1 4-4l6 3z" fill="#ff9a4a" /></svg>
          </Task>
          <Task $w={35} $bar="#76b9ed" aria-label="File Explorer">
            <svg width="19" height="18" viewBox="0 0 19 18"><path d="M0 1h7l2 2h9v5H0z" fill="#e0a324" /><path d="M0 3h19v13H0z" fill="#ffd766" /><path d="M0 1h7l2 2-2 1H0z" fill="#e0a324" /><path d="M3 18V9h13v9h-4v-5H7v5z" fill="#3b9be6" /></svg>
          </Task>
          <Task $w={35} $bg="#a52a2e" $bar="#ff0000" aria-label="Opera"><Icon w={22} h={22} c="#ff1b4a" sw={1.2}><circle cx="11" cy="11" r="10" /><ellipse cx="11" cy="11" rx="5" ry="8.500" /></Icon></Task>
          <Task $w={35} $bar="#76b9ed" aria-label="PowerPoint">
            <svg width="21" height="20" viewBox="0 0 21 20"><circle cx="11" cy="10" r="10" fill="#ed6c47" /><path d="M11 0a10 10 0 0 1 10 10H11z" fill="#ff8f6b" /><path d="M11 20a10 10 0 0 0 10-10H11z" fill="#d35230" /><rect y="4" width="12" height="12" rx="1" fill="#c43e1c" /><text x="3" y="14" fontSize="11" fontWeight="700" fill="#fff">P</text></svg>
          </Task>
        </Apps>
        <Task $w={45} $bg="#68646a" $bar="#76b9ed" aria-label="Excel">
          <svg width="20" height="20" viewBox="0 0 20 20"><path d="M5 0h8v10H5z" fill="#21a366" /><path d="M12 0h8v5h-8z" fill="#33c481" /><path d="M12 5h8v5h-8z" fill="#21a366" /><path d="M5 10h15v8H5z" fill="#185c37" /><path d="M12 10h8v4h-8z" fill="#107c41" /><rect y="4" width="12" height="12" rx="1" fill="#107c41" /><text x="2" y="14" fontSize="11" fontWeight="700" fill="#fff">X</text></svg>
        </Task>
        <Tray>
          <Task $w={36} aria-label="Help">
            <svg width="30" height="28" viewBox="0 0 30 28"><circle cx="13.500" cy="14" r="13.500" fill="#fff" /><circle cx="13.500" cy="14" r="11.500" fill="#1793d1" /><text x="8" y="22" fontSize="22" fontWeight="700" fill="#fff">?</text><circle cx="23" cy="20" r="6.500" fill="#1793d1" /><text x="21" y="25" fontSize="13" fontWeight="700" fill="#fff">i</text></svg>
          </Task>
          <Task $w={34} aria-label="Hidden icons"><Icon w={16} h={10} c="#fff" sw={1.3}><path d="m.5 9 7.500-8 7.500 8" /></Icon></Task>
          <Task $w={28} aria-label="Meet now"><Icon w={15} h={19} c="#fff" sw={1.2}><rect x="1" y="5" width="9" height="9" rx="1" /><path d="M10 8.500 14 6v7l-4-2.500M3 2.500q4-3 8 0M3 16.500q4 3 8 0" /></Icon></Task>
          <Task $w={30} aria-label="OneDrive"><Icon w={21} h={17} c="none"><path d="M4 14c-5-1-4-7 1-7 1-6 9-6 10-1 6 0 6 8 1 8z" fill="#a0a0a0" /><path d="m2 1 16 15" stroke="#fff" strokeWidth="1.500" /></Icon></Task>
          <Task $w={32} aria-label="Volume"><Icon w={20} h={16} c="#fff" sw={1.2}><path d="M1 5h3l4-4v14l-4-4H1zM11 5.500q2 2.500 0 5M13.500 3q4 5 0 10M16 1q6 7 0 14" /></Icon></Task>
          <Task $w={28} aria-label="Wi-Fi"><Icon w={16} h={16} c="#ddd" sw={1.3}><path d="M1 15C1 7 7 1 15 1M4.500 15C4.500 9 9 4.500 15 4.500M8 15c0-4 3-7 7-7M11.500 15c0-2 1.500-3.500 3.500-3.500" /><circle cx="14.500" cy="14.500" r="1" fill="#fff" /></Icon></Task>
          <Task $w={48}>ENG</Task>
          <Task $w={72}>3:02 am</Task>
          <Notify $w={50} aria-label="Notifications"><Icon w={20} h={20} c="#fff" sw={1.3}><path d="M.7.7h18.600v15.600h-6.500L10 19l-2.800-2.700H.7z" /></Icon></Notify>
          <Edge />
        </Tray>
      </Taskbar>
    </App>
  );
}
